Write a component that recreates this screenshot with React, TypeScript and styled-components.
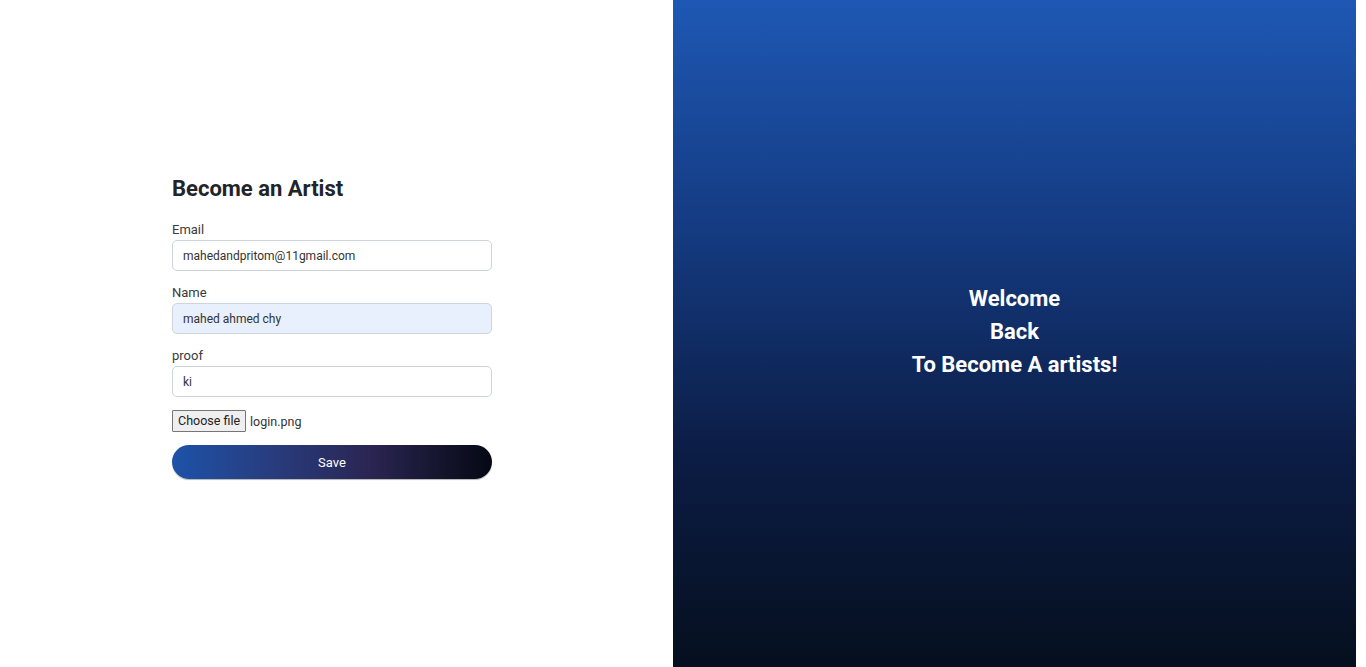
import React from "react";
import styled, { createGlobalStyle } from "styled-components";

const Global = createGlobalStyle`
  html, body { margin: 0; padding: 0; background: #fff; }
  body { font-family: Roboto, "Liberation Sans", sans-serif; }
  * { box-sizing: border-box; }
`;

const Page = styled.div`
  display: grid;
  grid-template-columns: 673px 683px 10px;
  height: 667px;
  overflow: hidden;
`;

const Left = styled.section`
  display: flex;
  flex-direction: column;
  padding: 175px 0 0 172px;
`;

const Title = styled.h1`
  margin: 0 0 20px;
  font-size: 22px;
  font-weight: 700;
  color: #212529;
  line-height: 27px;
`;

const Form = styled.form`
  display: flex;
  flex-direction: column;
  width: 320px;
`;

const Field = styled.div`
  display: flex;
  flex-direction: column;
  margin-bottom: 14px;
`;

const Label = styled.label`
  font-size: 13px;
  color: #3a3a3a;
  line-height: 16px;
  margin-bottom: 2px;
`;

const Input = styled.input<{ $filled?: boolean }>`
  height: 31px;
  width: 320px;
  border: 1px solid #ced4da;
  border-radius: 5px;
  padding: 0 10px;
  font-family: Roboto, "Liberation Sans", sans-serif;
  font-size: 12px;
  color: #333;
  background: ${(p) => (p.$filled ? "#e8f0fe" : "#fff")};
  outline: none;
`;

const FileRow = styled.div`
  display: flex;
  align-items: center;
  gap: 4px;
  margin: -1px 0 13px;
  height: 22px;
  font-size: 12.5px;
  color: #333;
`;

const FileButton = styled.span`
  display: inline-block;
  height: 22px;
  line-height: 20px;
  padding: 0 5px;
  border: 1px solid #767676;
  background: #efefef;
  color: #222;
  font-size: 12.5px;
  border-radius: 1px;
`;

const SaveButton = styled.button`
  height: 34px;
  width: 320px;
  border: none;
  border-radius: 17px;
  background: linear-gradient(90deg, #1d52a8 0%, #283d80 30%, #2a2552 62%, #050913 100%);
  color: #fff;
  font-family: Roboto, "Liberation Sans", sans-serif;
  font-size: 13px;
  box-shadow: 0 1px 1px rgba(0,0,0,0.3);
`;

const Right = styled.section`
  background: linear-gradient(180deg, #1e58b4 0%, #143a80 35%, #0c1d45 68%, #050f1e 100%);
  display: flex;
  flex-direction: column;
  align-items: center;
  padding-top: 282px;
`;

const Welcome = styled.h2`
  margin: 0;
  color: #fff;
  font-size: 22px;
  font-weight: 700;
  line-height: 33px;
  text-align: center;
`;

export default function App() {
  return (
    <>
      <Global />
      <Page>
        <Left>
          <Title>Become an Artist</Title>
          <Form onSubmit={(e) => e.preventDefault()}>
            <Field>
              <Label>Email</Label>
              <Input defaultValue="mahedandpritom@11gmail.com" />
            </Field>
            <Field>
              <Label>Name</Label>
              <Input $filled defaultValue="mahed ahmed chy" />
            </Field>
            <Field>
              <Label>proof</Label>
              <Input defaultValue="ki" />
            </Field>
            <FileRow>
              <FileButton>Choose file</FileButton>
              <span>login.png</span>
            </FileRow>
            <SaveButton type="submit">Save</SaveButton>
          </Form>
        </Left>
        <Right>
          <Welcome>
            Welcome
            <br />
            Back
            <br />
            To Become A artists!
          </Welcome>
        </Right>
        <div />
      </Page>
    </>
  );
}
